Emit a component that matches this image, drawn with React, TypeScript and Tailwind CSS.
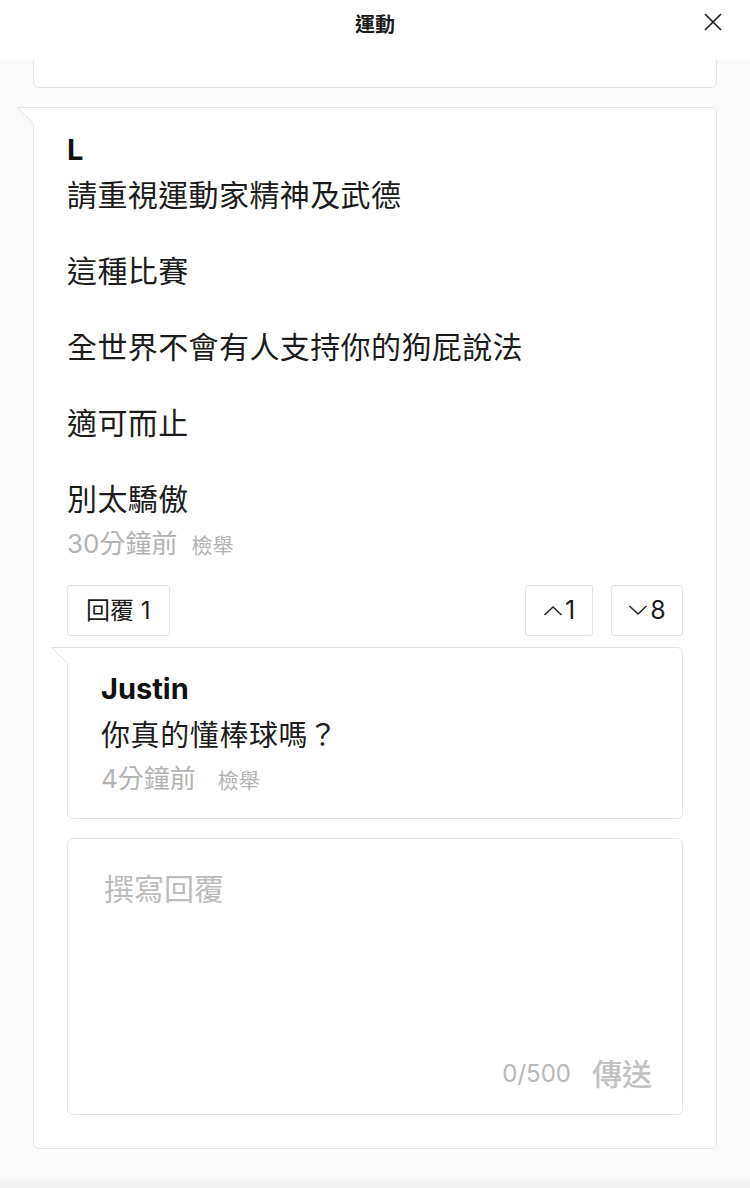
import { X } from 'lucide-react';

const FONT = { fontFamily: '"Inter", "Noto Sans CJK TC", sans-serif' };

const lines = ['請重視運動家精神及武德', '這種比賽', '全世界不會有人支持你的狗屁說法', '適可而止', '別太驕傲'];

// speech-bubble tail on a card's top-left corner
function Tail() {
  return (
    <svg className="absolute left-[-18px] top-[-1px]" width="19" height="19" viewBox="0 0 19 19">
      <polygon points="1.5,0.5 19,0.5 19,18 17.5,16.5" fill="#ffffff" />
      <path d="M19 0.5 H1.5 L17.5 16.5" fill="none" stroke="#e3e3e3" strokeWidth="1" />
    </svg>
  );
}

function Chevron({ up }: { up?: boolean }) {
  return (
    <svg width="20" height="11" viewBox="0 0 20 11" className="mr-[2px]">
      <polyline points={up ? '1.5,10 10,2 18.5,10' : '1.5,1 10,9 18.5,1'} fill="none" stroke="#222" strokeWidth="1.5" />
    </svg>
  );
}

export default function App() {
  return (
    <div className="w-[750px] h-[1188px] bg-[#fafafa] flex flex-col overflow-hidden text-[#1c1c1c]" style={FONT}>
      {/* header */}
      <div className="h-[60px] bg-white relative flex items-center justify-center shrink-0">
        <span className="text-[20px] font-bold leading-none mb-[10px]">運動</span>
        <button className="absolute right-[22px] top-[7px] text-[#222]"><X className="w-[30px] h-[30px]" strokeWidth={1.4} /></button>
      </div>

      {/* previous card, cut off */}
      <div className="mx-[33px] h-[28px] bg-white border border-t-0 border-[#e3e3e3] rounded-b-[6px] shrink-0" />

      {/* main comment card */}
      <div className="relative mx-[33px] mt-[19px] bg-white border border-[#e3e3e3] rounded-[6px] rounded-tl-none px-[33px] pt-[20px] pb-[33px]">
        <Tail />
        <div className="text-[29px] font-bold leading-[44px] text-[#111]">L</div>
        <div className="mt-[4px] text-[30px] leading-[38px] tracking-[0.4px]">
          {lines.map((l, i) => (
            <p key={i} className={i > 0 ? 'mt-[38px]' : ''}>{l}</p>
          ))}
        </div>
        <div className="mt-[8px] flex items-baseline text-[#b3b3b3] leading-[36px]">
          <span className="text-[26px]">30分鐘前</span>
          <span className="ml-[14px] text-[21px]">檢舉</span>
        </div>

        <div className="mt-[21px] flex items-center">
          <button className="h-[51px] px-[18px] border border-[#e3e3e3] rounded-[3px] bg-white text-[24px] leading-none">回覆 1</button>
          <div className="ml-auto flex gap-[18px]">
            <button className="h-[51px] w-[68px] border border-[#e3e3e3] rounded-[3px] bg-white flex items-center justify-center text-[25px] leading-none">
              <Chevron up />1
            </button>
            <button className="h-[51px] w-[72px] border border-[#e3e3e3] rounded-[3px] bg-white flex items-center justify-center text-[25px] leading-none">
              <Chevron />8
            </button>
          </div>
        </div>

        {/* reply */}
        <div className="relative mt-[11px] bg-white border border-[#e3e3e3] rounded-[6px] rounded-tl-none px-[33px] pt-[21px] pb-[21px]">
          <Tail />
          <div className="text-[29px] font-bold leading-[40px] text-[#111]">Justin</div>
          <div className="mt-[8px] text-[29px] leading-[38px] tracking-[0.6px]">你真的懂棒球嗎？</div>
          <div className="mt-[8px] flex items-baseline text-[#b3b3b3] leading-[32px]">
            <span className="text-[26px]">4分鐘前</span>
            <span className="ml-[22px] text-[21px]">檢舉</span>
          </div>
        </div>

        {/* reply box */}
        <div className="mt-[19px] h-[277px] border border-[#e3e3e3] rounded-[6px] bg-white flex flex-col pl-[36px] pr-[30px]">
          <div className="mt-[30px] text-[30px] leading-[40px] text-[#bdbdbd]">撰寫回覆</div>
          <div className="mt-auto mb-[21px] flex items-center justify-end">
            <span className="text-[24px] text-[#b8b8b8] leading-[38px]">0/500</span>
            <span className="ml-[21px] text-[30px] font-medium text-[#c2c2c2] leading-[38px]">傳送</span>
          </div>
        </div>
      </div>

      <div className="flex-1" />
      <div className="h-[12px] bg-gradient-to-b from-[#fafafa] to-[#efefef] shrink-0" />
    </div>
  );
}
